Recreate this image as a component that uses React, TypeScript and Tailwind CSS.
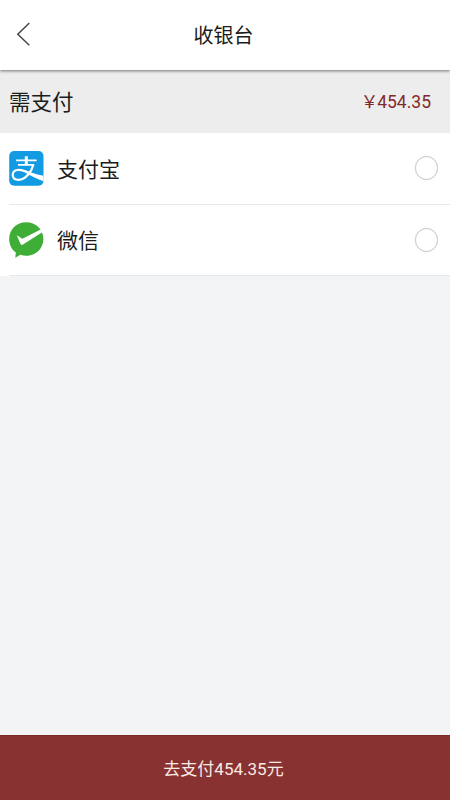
import React from 'react';

const AMOUNT = '454.35';

function AlipayIcon() {
  return (
    <svg className="w-[35px] h-[35px] shrink-0" viewBox="0 0 35 35" fill="none">
      <rect x="0.2" y="0" width="34.3" height="34.8" rx="5" fill="#129ae2" />
      <path d="M17.3 5.2V14.2" stroke="#fff" strokeWidth="3" />
      <path d="M7.2 9.4H27.6M9 13.9H25.2" stroke="#fff" strokeWidth="1.8" />
      <path
        d="M24.2 13.9C22.6 20.3 16.8 28.8 9.6 28.8C5.8 28.8 3.7 26.6 3.7 23.7C3.7 20.8 6.2 18.8 9.6 18.8C15 18.8 20 21.8 26 25"
        stroke="#fff"
        strokeWidth="2.2"
      />
      <path d="M16.5 19.6C22 21.8 28 23.8 34.5 24.8V30.2C28.5 28 22.6 25.4 16.5 21.8Z" fill="#fff" />
    </svg>
  );
}

function WechatIcon() {
  return (
    <svg className="w-[35px] h-[36px] shrink-0" viewBox="0 0 35 36" fill="none">
      <path
        d="M17.2 0.3C26.8 0.3 34.4 7.6 34.4 17C34.4 26.4 26.8 33.8 17.2 33.8C15.2 33.8 13.2 33.4 11.4 32.8L6.3 35.7L6.8 30.5C2.6 27.5 0.2 22.6 0.2 17C0.2 7.6 7.6 0.3 17.2 0.3Z"
        fill="#3fae36"
      />
      <path d="M7.8 13.2L13.4 16.8L31.6 7.6L33.2 10.3L14 22.6Q12.2 23.6 11.4 21.8Z" fill="#fff" />
    </svg>
  );
}

const methods = [
  { id: 'alipay', label: '支付宝', icon: AlipayIcon },
  { id: 'wechat', label: '微信', icon: WechatIcon },
];

export default function App() {
  return (
    <div className="w-[450px] h-[800px] flex flex-col bg-[#f2f4f6] overflow-hidden text-[#1c1c1c] font-[Roboto,'Noto_Sans_CJK_SC',sans-serif]">
      <header className="relative z-10 h-[70px] shrink-0 bg-white grid grid-cols-[60px_1fr_60px] items-center shadow-[0_1px_3px_rgba(0,0,0,0.5)]">
        <button className="pl-[16px] pb-[3px]" aria-label="返回">
          <svg className="w-[15px] h-[24px]" viewBox="0 0 15 24" fill="none">
            <path d="M13.3 1L1.8 12.2L13.3 23.2" stroke="#45474e" strokeWidth="1.5" />
          </svg>
        </button>
        <h1 className="text-center text-[20px] leading-[30px] pt-[2px] pr-[3px]">收银台</h1>
      </header>

      <div className="h-[63px] shrink-0 bg-[#ededed] flex items-center justify-between pl-[9px] pr-[19px]">
        <span className="text-[21.5px] pt-[4px]">需支付</span>
        <span className="text-[17.5px] pt-[2px] text-[#822a29]">
          <span className="-mr-px">￥</span>
          {AMOUNT}
        </span>
      </div>

      <div className="bg-white pl-[9px] shrink-0">
        {methods.map((method) => (
          <div key={method.id} className="h-[71.5px] flex items-center border-b border-[#e6e7e8] pr-[12px]">
            <method.icon />
            <span className="ml-[13px] flex-1 pt-[4px] text-[21px]">{method.label}</span>
            <span className="w-[23px] h-[24px] rounded-full border border-[#c2c2c2]" />
          </div>
        ))}
      </div>

      <button className="mt-auto h-[65px] shrink-0 bg-[#883331] border-t border-[#7a2926] text-[#fbeae6] text-[17px] text-center pt-[4px] pr-[3px]">
        去支付{AMOUNT}元
      </button>
    </div>
  );
}
